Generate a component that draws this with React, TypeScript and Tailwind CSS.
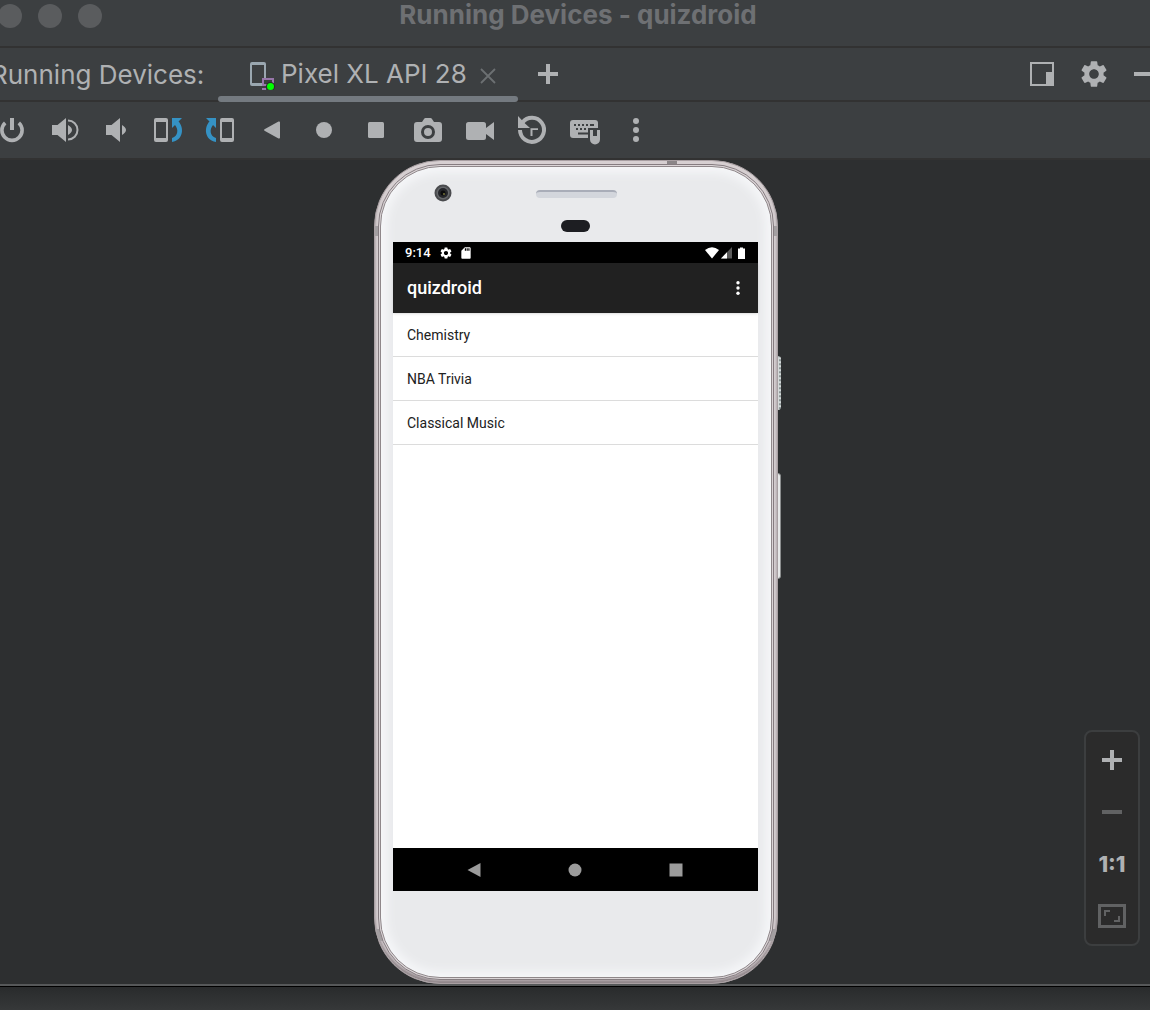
import React from "react";
import { MdSettings, MdSdCard } from "react-icons/md";

type IconProps = { children: React.ReactNode; className?: string };

function Icon({ children, className = "" }: IconProps) {
  return (
    <svg viewBox="0 0 32 32" className={`size-8 shrink-0 ${className}`} fill="currentColor" aria-hidden="true">
      {children}
    </svg>
  );
}

const rotateShapes = (
  <>
    <path fillRule="evenodd" d="M4 4h10a2 2 0 0 1 2 2v20a2 2 0 0 1-2 2H4a2 2 0 0 1-2-2V6a2 2 0 0 1 2-2Zm0 4v16h10V8Z" />
    <path fill="#3592c4" d="M20 4H30L26.500 7.500C32 13 32 26 20 28V24C26.500 22 26.500 15 23 11L20 14Z" />
  </>
);

const tools: { label: string; shape: React.ReactNode }[] = [
  {
    label: "Power",
    shape: (
      <>
        <path d="M14 4h4v12h-4z" />
        <path fill="none" stroke="currentColor" strokeWidth="3.6" d="M9.2 8.8A10.1 10.1 0 1 0 22.8 8.8" />
      </>
    ),
  },
  {
    label: "Volume Up",
    shape: (
      <>
        <path d="M4 11h5.500L18 4v24l-8.500-7H4zM20 11q8 5 0 10z" />
        <path fill="none" stroke="currentColor" strokeWidth="2" d="M20 6.500A9.500 9.500 0 0 1 20 25.500" />
      </>
    ),
  },
  { label: "Volume Down", shape: <path d="M6 11h5.500L20 4v24l-8.500-7H6zM22 11q8 5 0 10z" /> },
  { label: "Rotate Left", shape: rotateShapes },
  { label: "Rotate Right", shape: <g transform="matrix(-1 0 0 1 32 0)">{rotateShapes}</g> },
  {
    label: "Back",
    shape: <path d="M8.500 15.200 22.500 7.600q1.500-.6 1.500 1v14.800q0 1.600-1.500 1L8.500 16.800q-1-.8 0-1.600Z" />,
  },
  { label: "Home", shape: <circle cx="16" cy="16" r="8" /> },
  { label: "Overview", shape: <rect x="8" y="8" width="16" height="16" rx="1.500" /> },
  {
    label: "Take Screenshot",
    shape: (
      <>
        <path d="M5 8h5l2-3q.6-1 1.500-1h5q1 0 1.500 1l2 3h5a3 3 0 0 1 3 3v14a3 3 0 0 1-3 3H5a3 3 0 0 1-3-3V11a3 3 0 0 1 3-3Z" />
        <circle cx="16" cy="18" r="5.500" fill="none" stroke="#3c3f41" strokeWidth="3" />
      </>
    ),
  },
  {
    label: "Record Screen",
    shape: <path d="M4.500 8h15A2.500 2.500 0 0 1 22 10.500V14L30 8v18l-8-6v3.500a2.500 2.500 0 0 1-2.500 2.500h-15A2.500 2.500 0 0 1 2 23.500v-13A2.500 2.500 0 0 1 4.500 8Z" />,
  },
  {
    label: "Snapshots",
    shape: (
      <>
        <path fill="none" stroke="currentColor" strokeWidth="4" d="M6.500 8.500A12 12 0 1 1 4 16" />
        <path d="M2 2v12h12L9 9.500zM14.500 14.300H22v1.700h-5.500v6h-2z" />
      </>
    ),
  },
  {
    label: "Hardware Input",
    shape: (
      <>
        <rect x="2" y="6" width="28" height="18" rx="3" />
        <path
          stroke="#3c3f41"
          strokeWidth="2"
          fill="none"
          strokeDasharray="2 2"
          d="M6 11h16M8 15h14"
        />
        <path stroke="#3c3f41" strokeWidth="2" d="M22 11h4M22 15h4M10 19.500h10" />
        <path fill="#3c3f41" d="M20 14h12v10H20z" />
        <path d="M22 16h3v6h4v-6h3v9.500a5 5 0 0 1-10 0z" />
      </>
    ),
  },
  {
    label: "More",
    shape: (
      <>
        <circle cx="16" cy="7" r="3" />
        <circle cx="16" cy="16" r="3" />
        <circle cx="16" cy="25" r="3" />
      </>
    ),
  },
];

function TitleBar() {
  return (
    <header className="flex h-12 items-start border-b-2 border-[#323232] pt-1">
      <div className="-ml-0.5 flex flex-1 gap-4">
        <button aria-label="Close window" className="size-6 rounded-full bg-[#5a5c5e]" />
        <button aria-label="Minimize window" className="size-6 rounded-full bg-[#5a5c5e]" />
        <button aria-label="Zoom window" className="size-6 rounded-full bg-[#5a5c5e]" />
      </div>
      <h1 className="pl-2 text-[26px] leading-[22px] font-bold text-[#6e7073]">Running Devices - quizdroid</h1>
      <div className="flex-1" />
    </header>
  );
}

function TabBar() {
  return (
    <div className="flex h-[54px] border-b-2 border-[#323232] text-[26px] leading-[54px]">
      <div className="-ml-[9px] w-[227px] shrink-0 whitespace-nowrap">Running Devices:</div>
      <div className="relative flex w-[300px] shrink-0 items-center pl-[26px]">
        <Icon className="mr-[5px]">
          <path fill="#9aa7b0" fillRule="evenodd" d="M8 4h12a2 2 0 0 1 2 2v14h-2V7H8v18h10v3H8a2 2 0 0 1-2-2V6a2 2 0 0 1 2-2Z" />
          <path fill="none" stroke="#9876aa" strokeWidth="2" d="M19 28V21h10v7M18 27h5M18 31h4" />
          <circle cx="26.500" cy="28.500" r="4.600" fill="#2b2b2b" />
          <circle cx="26.500" cy="28.500" r="3.500" fill="#00ff00" />
        </Icon>
        <button className="whitespace-nowrap">Pixel XL API 28</button>
        <button aria-label="Close tab" className="mr-3.5 ml-auto text-[#6c7072]">
          <svg viewBox="0 0 32 32" className="size-8" aria-hidden="true">
            <path fill="none" stroke="currentColor" strokeWidth="1.800" d="M9 11l14 14M23 11 9 25" />
          </svg>
        </button>
        <div className="absolute inset-x-0 -bottom-0.5 h-1.5 rounded-full bg-[#747a80]" />
      </div>
      <button aria-label="Add device" className="ml-3.5">
        <Icon>
          <path d="M14 6h4v8h8v4h-8v8h-4v-8H6v-4h8z" />
        </Icon>
      </button>
      <div className="-mr-3 ml-auto flex items-center gap-5">
        <button aria-label="Window mode">
          <Icon>
            <path fillRule="evenodd" d="M4 4h24v24H4Zm2 2v20h14V14h6V6Z" />
          </Icon>
        </button>
        <button aria-label="Settings">
          <MdSettings className="size-8" />
        </button>
        <button aria-label="Hide">
          <Icon>
            <path d="M4 14h24v4H4z" />
          </Icon>
        </button>
      </div>
    </div>
  );
}

function Toolbar() {
  return (
    <div role="toolbar" aria-label="Device controls" className="-ml-3.5 flex h-14">
      {tools.map((tool) => (
        <button key={tool.label} aria-label={tool.label} className="flex w-13 items-center justify-center">
          <Icon>{tool.shape}</Icon>
        </button>
      ))}
    </div>
  );
}

function Screen() {
  return (
    <div className="flex h-[649px] flex-col bg-white font-[Roboto,sans-serif] text-[#212121]">
      <div className="flex h-[21px] items-center bg-black px-3 text-[13px] font-medium text-white">
        <span>9:14</span>
        <MdSettings className="ml-2 size-[14px]" />
        <MdSdCard className="ml-1.5 size-[14px]" />
        <svg viewBox="0 0 42 12" className="ml-auto h-3 w-[42px]" aria-label="Wi-Fi, signal and battery">
          <path fill="#fff" d="M1 3Q8 -2.500 15 3L8 11.500Z" />
          <path fill="#5a5a5a" d="M17 11.500 28 0v11.500Z" />
          <path fill="#fff" d="M17 11.500 23 5.200v6.300Z" />
          <path fill="#fff" d="M34 1.500h2V.5h3v1h2v11h-7z" />
        </svg>
      </div>
      <div className="flex h-[50px] items-center justify-between bg-[#212121] pr-3 pl-3.5 text-white shadow-sm">
        <h2 className="text-lg font-medium">quizdroid</h2>
        <button aria-label="More options">
          <svg viewBox="0 0 16 16" className="size-4" fill="currentColor">
            <circle cx="8" cy="2.800" r="1.700" />
            <circle cx="8" cy="8" r="1.700" />
            <circle cx="8" cy="13.200" r="1.700" />
          </svg>
        </button>
      </div>
      <ul className="flex-1 text-sm">
        {["Chemistry", "NBA Trivia", "Classical Music"].map((topic) => (
          <li key={topic} className="flex h-11 items-center border-b border-[#dcdcdc] px-3.5">
            {topic}
          </li>
        ))}
      </ul>
      <nav className="flex h-[43px] items-center justify-center gap-[69px] bg-black pr-0.5 text-[#9b9b9b]">
        <button aria-label="Back">
          <Icon>
            <path d="M9.500 16 22.500 9v14Z" />
          </Icon>
        </button>
        <button aria-label="Home">
          <Icon>
            <circle cx="16" cy="16" r="6.500" />
          </Icon>
        </button>
        <button aria-label="Recents">
          <Icon>
            <path d="M9.500 9.500h13v13h-13z" />
          </Icon>
        </button>
      </nav>
    </div>
  );
}

function Phone() {
  return (
    <div className="relative w-[404px]">
      <div className="absolute top-[196px] -right-[3px] h-[54px] w-1.5 rounded-sm border-r-2 border-dotted border-[#8d9797] bg-[#d5dada]" />
      <div className="absolute top-[313px] -right-[3px] h-[106px] w-1.5 rounded-sm border border-[#8b8e8e] bg-[#e6e8e8]" />
      <div className="relative overflow-hidden rounded-[66px] border border-[#a89fa2] bg-[#d6cfd1] p-[3px] shadow-[inset_0_-3px_3px_#8e8488]">
        <div className="absolute top-[65px] -left-px h-2.5 w-2 bg-[#a39fa1]" />
        <div className="absolute top-[65px] -right-px h-2.5 w-2 bg-[#a39fa1]" />
        <div className="absolute bottom-[42px] left-0 h-3 w-2 bg-[#a39fa1]" />
        <div className="absolute right-0 bottom-[42px] h-3 w-2 bg-[#a39fa1]" />
        <div className="absolute top-0 left-[292px] h-1 w-2.5 bg-[#8b8688]" />
        <div className="relative rounded-[62px] border border-[#857c80] bg-[#dbd5d7] p-px">
          <div className="rounded-[60px] border border-[#8f878a] bg-[#e9eaec] pr-[13px] pb-[86px] pl-3 shadow-[inset_0_0_10px_6px_#f5f6f8]">
            <div className="relative h-[75px]">
              <svg viewBox="0 0 18 18" className="absolute top-[17px] left-[41px] size-[18px]" aria-hidden="true">
                <circle cx="9" cy="9" r="8.500" fill="#4a4b4e" />
                <circle cx="9" cy="9" r="6.500" fill="#66686b" />
                <circle cx="9" cy="9" r="5" fill="#25262a" />
                <circle cx="9" cy="9" r="2.500" fill="#0b0b0d" />
                <circle cx="10" cy="10" r="1" fill="#77753a" />
              </svg>
              <div className="absolute top-[23px] left-[143px] h-2 w-[81px] rounded-sm border-t-2 border-[#a9adb8] bg-[#d3d6dc]" />
              <div className="absolute top-[53px] left-[168px] h-3 w-[29px] rounded-full bg-[#1d1e22]" />
            </div>
            <Screen />
          </div>
        </div>
      </div>
    </div>
  );
}

function ZoomPanel() {
  return (
    <div className="absolute right-2.5 bottom-[38px] flex w-14 flex-col rounded-lg border-2 border-[#3c3e3f] bg-[#2b2b2b] py-0.5">
      <button aria-label="Zoom in" className="flex h-13 items-center justify-center">
        <Icon>
          <path d="M14 6h4v8h8v4h-8v8h-4v-8H6v-4h8z" />
        </Icon>
      </button>
      <button aria-label="Zoom out" className="flex h-13 items-center justify-center text-[#616263]">
        <Icon>
          <path d="M6 14h20v4H6z" />
        </Icon>
      </button>
      <button className="h-13 text-[22px] font-extrabold">1:1</button>
      <button aria-label="Zoom to fit" className="flex h-13 items-center justify-center text-[#616263]">
        <Icon>
          <path fillRule="evenodd" d="M2 4h28v24H2Zm3 3v18h22V7Z" />
          <path d="M8 10h6v2h-4v4H8zM24 22h-6v-2h4v-4h2z" />
        </Icon>
      </button>
    </div>
  );
}

export default function App() {
  return (
    <div className="flex min-h-screen flex-col overflow-hidden bg-[#3c3f41] font-[Inter,sans-serif] text-[#afb1b3]">
      <TitleBar />
      <TabBar />
      <Toolbar />
      <main className="relative flex flex-1 items-start justify-center border-t-2 border-[#323232] bg-[#2d2f30] pl-0.5">
        <Phone />
        <ZoomPanel />
      </main>
      <footer className="h-[26px] border-t-2 border-[#565859]">
        <div className="h-full border-t border-black bg-linear-to-b from-[#292b2c] to-[#363839]" />
      </footer>
    </div>
  );
}
